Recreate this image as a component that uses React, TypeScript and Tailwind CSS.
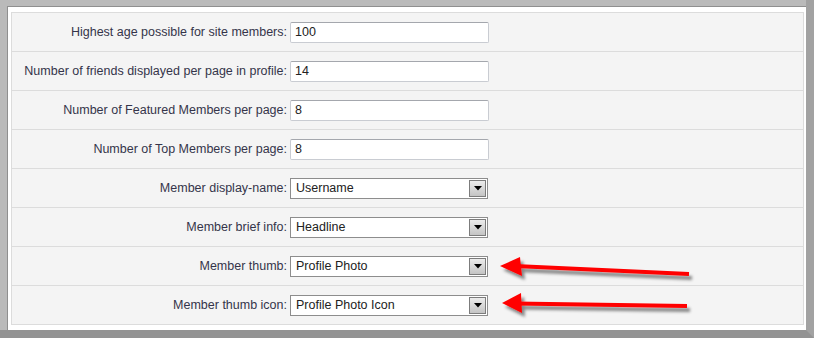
import React from "react";

const rows: { label: string; value: string; kind: "input" | "select" }[] = [
  { label: "Highest age possible for site members:", value: "100", kind: "input" },
  { label: "Number of friends displayed per page in profile:", value: "14", kind: "input" },
  { label: "Number of Featured Members per page:", value: "8", kind: "input" },
  { label: "Number of Top Members per page:", value: "8", kind: "input" },
  { label: "Member display-name:", value: "Username", kind: "select" },
  { label: "Member brief info:", value: "Headline", kind: "select" },
  { label: "Member thumb:", value: "Profile Photo", kind: "select" },
  { label: "Member thumb icon:", value: "Profile Photo Icon", kind: "select" },
];

function TextInput({ value }: { value: string }) {
  return (
    <div className="w-[199px] h-[21px] bg-white border border-[#c9ccd2] border-t-[#a4a7ad] rounded-[2px] flex items-center pl-[4px] text-[12.5px] text-[#222]">
      {value}
    </div>
  );
}

function Select({ value }: { value: string }) {
  return (
    <div className="w-[198px] h-[21px] bg-white border border-[#8d8d8d] flex items-center justify-between pl-[5px] pr-[1px] text-[12.5px] text-[#222]">
      <span>{value}</span>
      <div className="w-[17px] h-[17px] border border-[#7c7c7c] bg-gradient-to-b from-[#ececec] to-[#c4c4c4] flex items-center justify-center">
        <svg width="8" height="5" viewBox="0 0 8 5">
          <polygon points="0,0 8,0 4,4.5" fill="#000" />
        </svg>
      </div>
    </div>
  );
}

export default function App() {
  return (
    <div
      className="relative w-[814px] h-[338px] bg-[#bababa] pt-[6px] pl-[7px] border-r-[8px] border-b-[8px] border-r-[#a2a2a2] border-b-[#939393]"
      style={{ fontFamily: '"Liberation Sans", Arial, sans-serif' }}
    >
      <div className="h-full bg-white border-l border-t border-[#8f8f8f] pt-[5px] pl-[3px] pr-[2px] pb-[5px]">
        <div className="border-t border-l border-r border-[#dcdcdc] bg-[#f4f4f4]">
          {rows.map((r) => (
            <div key={r.label} className="h-[39px] border-b border-[#dcdcdc] flex items-center">
              <div className="w-[278px] pr-[3px] text-right text-[12.5px] text-[#34344a] whitespace-nowrap">
                {r.label}
              </div>
              {r.kind === "input" ? <TextInput value={r.value} /> : <Select value={r.value} />}
            </div>
          ))}
        </div>
      </div>
      <svg className="absolute left-0 top-0 pointer-events-none" width="814" height="338" viewBox="0 0 814 338">
        <defs>
          <filter id="sh" x="-20%" y="-50%" width="140%" height="200%">
            <feDropShadow dx="3" dy="4" stdDeviation="1.6" floodColor="#000" floodOpacity="0.45" />
          </filter>
        </defs>
        <g filter="url(#sh)" fill="#f00" stroke="#f00">
          <line x1="515" y1="266" x2="689" y2="274" strokeWidth="4" />
          <polygon points="500,266 520,257 522,276" stroke="none" />
          <line x1="515" y1="303.5" x2="687" y2="306" strokeWidth="4" />
          <polygon points="502,303 521,293 522,313" stroke="none" />
        </g>
      </svg>
    </div>
  );
}
